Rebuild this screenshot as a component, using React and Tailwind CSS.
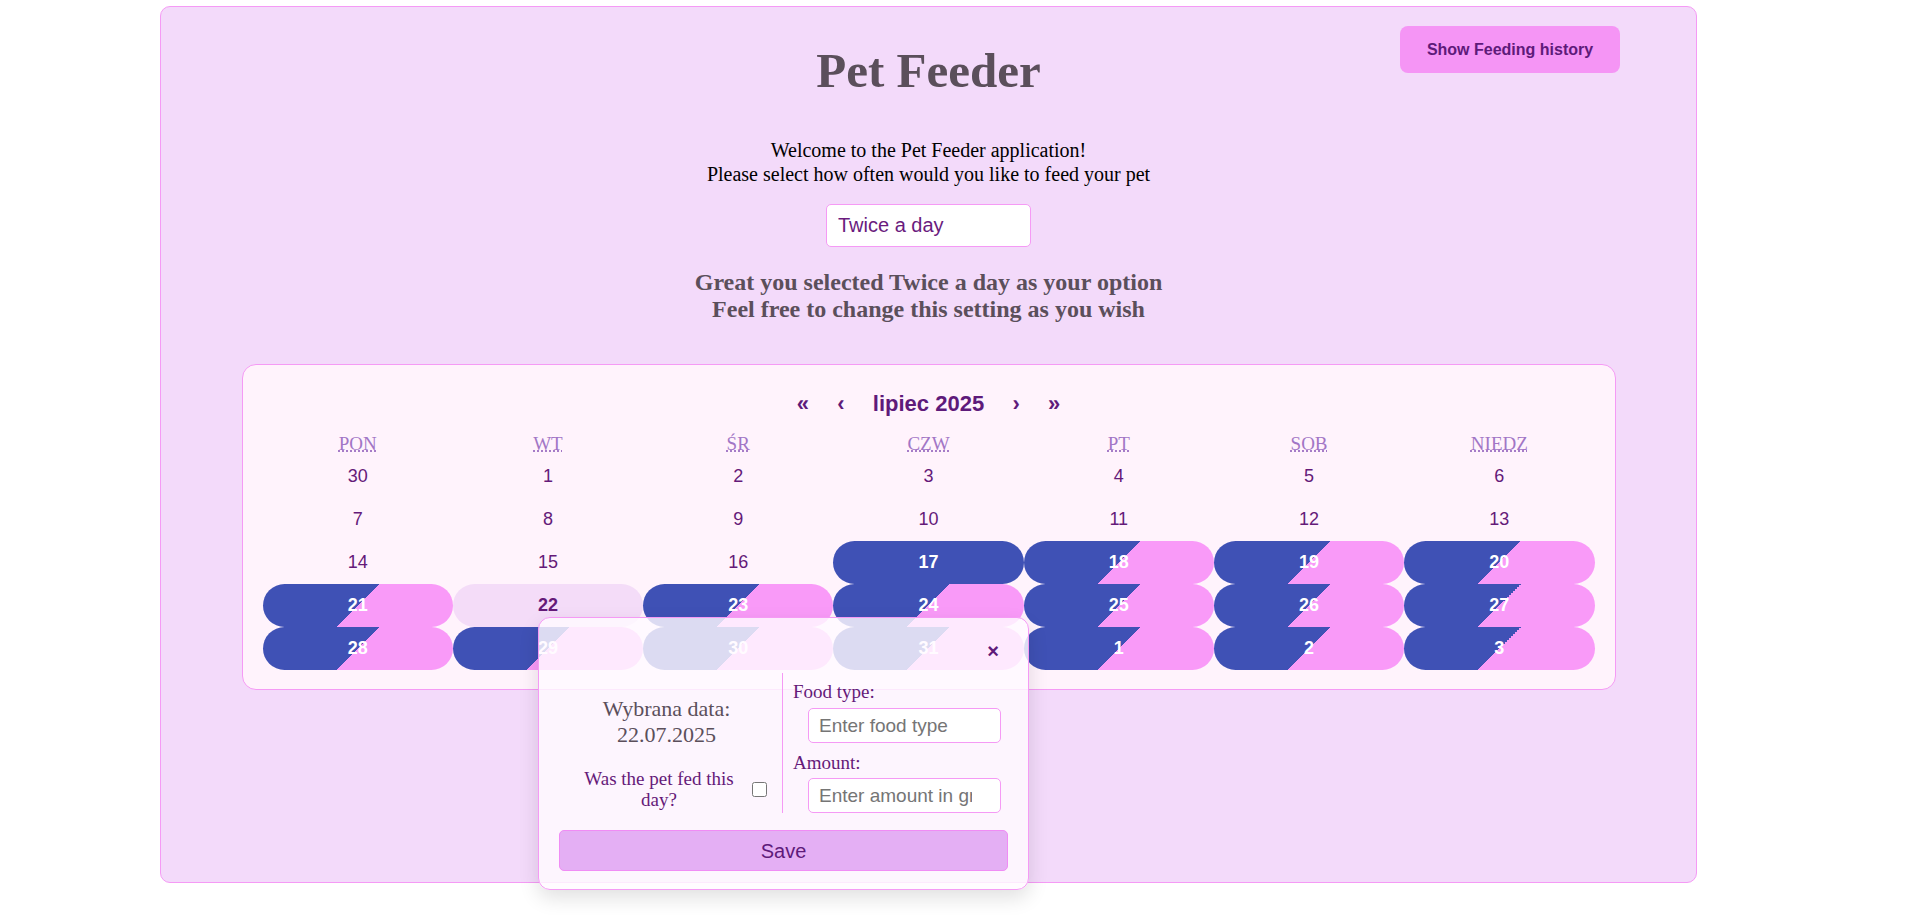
import React from "react";

const serif = "font-['Liberation_Serif','Times_New_Roman',serif]";
const sans = "font-['Liberation_Sans',Arial,sans-serif]";

// p = poprzedni miesiąc, s = karmienie (dwukolorowe), b = dzisiaj, a = wybrany
const weeks = [
    [["30", "p"], ["1"], ["2"], ["3"], ["4"], ["5"], ["6"]],
    [["7"], ["8"], ["9"], ["10"], ["11"], ["12"], ["13"]],
    [["14"], ["15"], ["16"], ["17", "b"], ["18", "s"], ["19", "s"], ["20", "s"]],
    [["21", "s"], ["22", "a"], ["23", "s"], ["24", "s"], ["25", "s"], ["26", "s"], ["27", "s"]],
    [["28", "s"], ["29", "s"], ["30", "s"], ["31", "s"], ["1", "s"], ["2", "s"], ["3", "s"]],
];

const weekdays = ["Pon", "Wt", "Śr", "Czw", "Pt", "Sob", "Niedz"];

const tileClass = (kind) => {
    if (kind === "s")
        return "bg-[linear-gradient(135deg,#3f51b5_50%,#f99af8_50%)] text-white font-bold";
    if (kind === "b") return "bg-[#3f51b5] text-white font-bold";
    if (kind === "a") return "bg-[#f4dcf8] text-[#651a79] font-bold";
    return "text-[#651a79]";
};

const Calendar = () => (
    <div className="mx-auto mt-[42px] h-[326px] w-[1374px] rounded-[14px] border border-[#f59af5] bg-[#fff3fc] px-[20px] pt-[16px]">
        {/* Nawigacja miesiąca */}
        <div className={`flex h-[44px] items-center justify-center text-[22px] font-bold text-[#5e1a7a] ${sans}`}>
            <button className="w-[38px]">«</button>
            <button className="w-[38px]">‹</button>
            <span className="px-[13px]">lipiec 2025</span>
            <button className="w-[38px]">›</button>
            <button className="w-[38px]">»</button>
        </div>

        {/* Dni tygodnia */}
        <div className="grid h-[30px] grid-cols-7 items-center pt-[6px]">
            {weekdays.map((d) => (
                <div key={d} className={`text-center text-[19px] uppercase leading-none text-[#a276c6] ${serif}`}>
                    <abbr className="underline decoration-dotted decoration-[#a276c6]">{d}</abbr>
                </div>
            ))}
        </div>

        {/* Dni */}
        <div className="grid grid-cols-7">
            {weeks.flat().map(([day, kind], i) => (
                <button
                    key={i}
                    className={`h-[43px] rounded-full text-center text-[18px] ${sans} ${tileClass(kind)}`}
                >
                    {day}
                </button>
            ))}
        </div>
    </div>
);

const FeedPopup = () => (
    <div className="absolute left-[377px] top-[610px] w-[491px] rounded-[12px] border border-[#f59af5] bg-[rgba(255,250,255,0.82)] px-[20px] pb-[18px] pt-[55px] shadow-[0_8px_20px_rgba(0,0,0,0.12)]">
        <button className={`absolute right-[29px] top-[20px] text-[20px] font-bold leading-[26px] text-[#5e1a7a] ${sans}`}>
            ×
        </button>

        <div className="flex">
            {/* Lewa kolumna */}
            <div className={`w-[223px] pt-[23px] text-center ${serif}`}>
                <p className="pr-[8px] text-[22px] leading-[26px] text-[#5b4f5b]">
                    Wybrana data:
                    <br />
                    22.07.2025
                </p>
                <div className="mt-[20px] flex items-center justify-center gap-[9px] pl-[1px]">
                    <label className="w-[168px] text-[19px] leading-[21px] text-[#651a79]">
                        Was the pet fed this day?
                    </label>
                    <input type="checkbox" className="h-[15px] w-[15px]" />
                </div>
            </div>

            {/* Prawa kolumna */}
            <div className={`w-[226px] border-l border-[#f59af5] pl-[10px] pt-[9px] ${serif}`}>
                <label className="block text-[19px] leading-[20px] text-[#651a79]">Food type:</label>
                <input
                    placeholder="Enter food type"
                    className={`ml-[15px] mt-[6px] h-[35px] w-[193px] rounded-[5px] border border-[#f59af5] bg-white pl-[10px] pr-[28px] text-[19px] text-[#5e1a7a] placeholder:text-[#757575] outline-none ${sans}`}
                />
                <label className="mt-[10px] block text-[19px] leading-[20px] text-[#651a79]">Amount:</label>
                <input
                    placeholder="Enter amount in grams"
                    className={`ml-[15px] mt-[5px] h-[35px] w-[193px] rounded-[5px] border border-[#f59af5] bg-white pl-[10px] pr-[28px] text-[19px] text-[#5e1a7a] placeholder:text-[#757575] outline-none ${sans}`}
                />
            </div>
        </div>

        <button
            className={`mt-[17px] h-[41px] w-full rounded-[5px] border border-[#f08cf5] bg-[#e4aff4] text-[20px] text-[#5e1a7a] ${sans}`}
        >
            Save
        </button>
    </div>
);

const App = () => {
    return (
        <div className="min-h-[915px] bg-white">
            <div className={`relative ml-[160px] mt-[6px] h-[877px] w-[1537px] rounded-[10px] border border-[#f59af5] bg-[#f3dafa] ${serif}`}>
                {/* Nagłówek */}
                <div className="grid grid-cols-[1fr_auto_1fr] items-start">
                    <div />
                    <h1 className="pt-[36px] text-[49px] font-bold leading-[56px] text-[#5b4f5b]">Pet Feeder</h1>
                    <div className="flex justify-end">
                        <button
                            className={`mr-[76px] mt-[19px] h-[47px] w-[220px] rounded-[8px] bg-[#f595f5] text-[16px] font-bold text-[#5e1a7a] ${sans}`}
                        >
                            Show Feeding history
                        </button>
                    </div>
                </div>

                <p className="mt-[39px] text-center text-[20px] leading-[24px] text-black">
                    Welcome to the Pet Feeder application!
                    <br />
                    Please select how often would you like to feed your pet
                </p>

                <input
                    readOnly
                    value="Twice a day"
                    className={`mx-auto mt-[18px] block h-[43px] w-[205px] rounded-[5px] border border-[#f59af5] bg-white px-[11px] text-[20px] text-[#6a1b7e] outline-none ${sans}`}
                />

                <p className="mb-[-1px] mt-[22px] text-center text-[24px] font-bold leading-[27px] text-[#5b4f5b]">
                    Great you selected Twice a day as your option
                    <br />
                    Feel free to change this setting as you wish
                </p>

                <Calendar />
                <FeedPopup />
            </div>
        </div>
    );
};

export default App;
